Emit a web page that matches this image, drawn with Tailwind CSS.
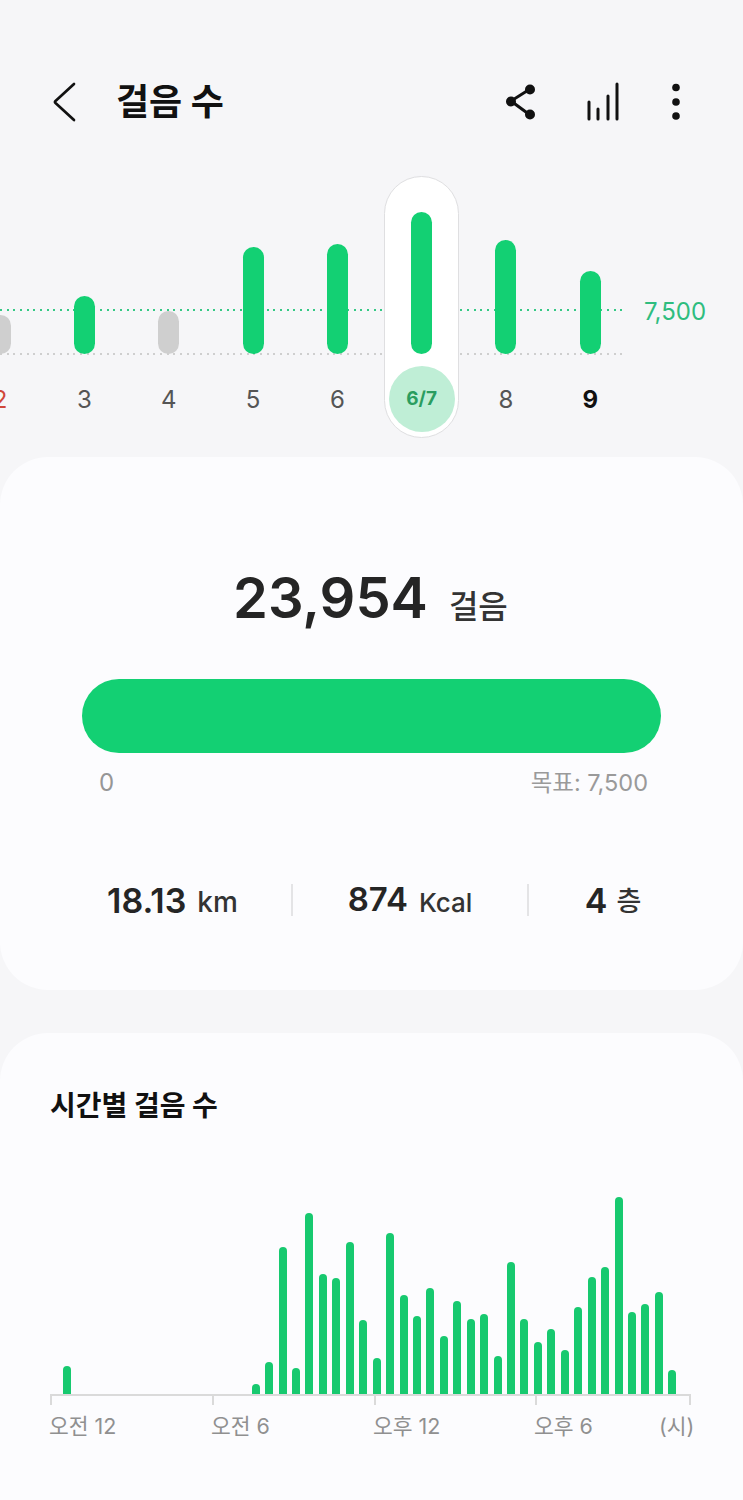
<!DOCTYPE html>
<html lang="ko">
<head>
<meta charset="utf-8">
<script src="https://cdn.jsdelivr.net/npm/@tailwindcss/browser@4"></script>
</head>
<body class="m-0 h-[1500px] w-[743px] overflow-hidden bg-[#f6f6f8] font-['Inter','Noto_Sans_CJK_KR',sans-serif] text-[#252525]">
<header class="mt-[72px] flex h-[60px] items-center">
  <svg class="ml-[50px] h-[40px] w-[28px]" viewBox="0 0 28 40" fill="none" stroke="#111" stroke-width="2.7" stroke-linecap="round" stroke-linejoin="round"><path d="M24 2 L5.5 19 Q4.5 20 5.5 21 L24 38"/></svg>
  <h1 class="ml-[38px] w-[300px] text-[36px] leading-[60px] font-bold text-[#111]">걸음 수</h1>
  <svg class="ml-[87px] h-[40px] w-[36px]" viewBox="0 0 36 40" fill="#111" stroke="#111"><path d="M27 7 L8 19 L27 33" fill="none" stroke-width="3"/><circle cx="8" cy="19.5" r="5" stroke="none"/><circle cx="27" cy="7.5" r="5" stroke="none"/><circle cx="27" cy="32.5" r="5" stroke="none"/></svg>
  <svg class="ml-[46px] h-[40px] w-[36px]" viewBox="0 0 36 40" fill="none" stroke="#111" stroke-width="3" stroke-linecap="round"><path d="M4 20 V37 M13 27 V37 M23 14 V37 M32 2 V37"/></svg>
  <svg class="ml-[45px] h-[40px] w-[20px]" viewBox="0 0 20 40" fill="#111"><circle cx="10" cy="5.5" r="3.8"/><circle cx="10" cy="20" r="3.8"/><circle cx="10" cy="34" r="3.8"/></svg>
</header>

<section class="relative mt-[44px] h-[262px] w-[743px]">
  <div class="absolute top-[133px] left-0 h-[2px] w-[622px] bg-[repeating-linear-gradient(90deg,#35c985_0_2px,transparent_2px_6.67px)]"></div>
  <div class="absolute top-[177px] left-0 h-[2px] w-[622px] bg-[repeating-linear-gradient(90deg,#cfcfcf_0_2px,transparent_2px_6.67px)]"></div>
  <span class="absolute top-[120px] left-[644px] text-[24px] leading-[32px] text-[#2fbd7f]">7,500</span>
  <div class="relative -ml-[42px] flex w-[800px]">
    <div class="relative flex w-[84.3px] flex-col items-center">
      <div class="flex h-[178px] items-end"><div class="h-[39px] w-[21px] rounded-full bg-[#cfcfcf]"></div></div>
      <div class="mt-[13px] flex h-[66px] items-center text-[24px] text-[#d0473a]">2</div>
    </div>
    <div class="relative flex w-[84.3px] flex-col items-center">
      <div class="flex h-[178px] items-end"><div class="h-[58px] w-[21px] rounded-full bg-[#13d073]"></div></div>
      <div class="mt-[13px] flex h-[66px] items-center text-[24px] text-[#555]">3</div>
    </div>
    <div class="relative flex w-[84.3px] flex-col items-center">
      <div class="flex h-[178px] items-end"><div class="h-[43px] w-[21px] rounded-full bg-[#cfcfcf]"></div></div>
      <div class="mt-[13px] flex h-[66px] items-center text-[24px] text-[#555]">4</div>
    </div>
    <div class="relative flex w-[84.3px] flex-col items-center">
      <div class="flex h-[178px] items-end"><div class="h-[107px] w-[21px] rounded-full bg-[#13d073]"></div></div>
      <div class="mt-[13px] flex h-[66px] items-center text-[24px] text-[#555]">5</div>
    </div>
    <div class="relative flex w-[84.3px] flex-col items-center">
      <div class="flex h-[178px] items-end"><div class="h-[110px] w-[21px] rounded-full bg-[#13d073]"></div></div>
      <div class="mt-[13px] flex h-[66px] items-center text-[24px] text-[#555]">6</div>
    </div>
    <div class="relative flex w-[84.3px] flex-col items-center">
      <div class="absolute top-0 left-[4.1px] h-[262px] w-[75px] rounded-full border-[1.5px] border-[#dfdfe1] bg-white ring-1 ring-[#f6f6f8]"></div>
      <div class="relative flex h-[178px] items-end"><div class="h-[142px] w-[21px] rounded-full bg-[#13d073]"></div></div>
      <div class="relative mt-[12px] flex h-[66px] w-[66px] items-center justify-center rounded-full bg-[#bfeed6] text-[19px] font-bold text-[#2a9d5f]">6/7</div>
    </div>
    <div class="relative flex w-[84.3px] flex-col items-center">
      <div class="flex h-[178px] items-end"><div class="h-[114px] w-[21px] rounded-full bg-[#13d073]"></div></div>
      <div class="mt-[13px] flex h-[66px] items-center text-[24px] text-[#555]">8</div>
    </div>
    <div class="relative flex w-[84.3px] flex-col items-center">
      <div class="flex h-[178px] items-end"><div class="h-[83px] w-[21px] rounded-full bg-[#13d073]"></div></div>
      <div class="mt-[13px] flex h-[66px] items-center text-[24px] font-bold text-[#111]">9</div>
    </div>
  </div>
</section>

<section class="mt-[19px] h-[533px] rounded-[48px] bg-[#fcfcfe] pt-[105px]">
  <div class="flex h-[72px] items-baseline pl-[233px]">
    <span class="text-[56px] leading-[72px] font-semibold text-[#252525]">23,954</span>
    <span class="ml-[21px] text-[32px] font-medium text-[#333]">걸음</span>
  </div>
  <div class="mx-[82px] mt-[45px] h-[74px] w-[579px] rounded-full bg-[#13d073]"></div>
  <div class="mt-[13px] flex w-[648px] items-baseline justify-between pl-[99px] text-[24px] leading-[34px] text-[#969696]">
    <span>0</span><span class="text-[23.5px] text-[#9a9a9a]">목표: 7,500</span>
  </div>
  <div class="mt-[84px] ml-[54px] flex h-[32px] items-center">
    <div class="flex h-full w-[239px] items-center justify-center gap-[11px] border-r-2 border-[#e4e4e6]"><span class="text-[34px] font-semibold">18.13</span><span class="mt-[4px] text-[28px] font-medium text-[#333]">km</span></div>
    <div class="flex h-full w-[236px] items-center justify-center gap-[11px] border-r-2 border-[#e4e4e6]"><span class="text-[33px] font-semibold">874</span><span class="mt-[4px] text-[26px] font-medium text-[#333]">Kcal</span></div>
    <div class="flex h-full w-[168px] items-center justify-center gap-[9px]"><span class="text-[34px] font-semibold">4</span><span class="mt-[4px] text-[27px] font-medium text-[#333]">층</span></div>
  </div>
</section>

<section class="mt-[43px] h-[520px] rounded-t-[48px] bg-[#fcfcfe] pt-[53px]">
  <h2 class="ml-[50px] text-[28px] leading-[40px] font-bold text-[#111]">시간별 걸음 수</h2>
  <div class="mt-[68px] flex h-[200px] items-end gap-[5.44px] pl-[62.7px]">
    <div class="w-[8px] rounded-t-[4px] bg-[#17c96f]" style="height:28px"></div>
    <div class="ml-[175.6px] w-[8px] rounded-t-[4px] bg-[#17c96f]" style="height:10px"></div>
    <div class="w-[8px] rounded-t-[4px] bg-[#17c96f]" style="height:32px"></div>
    <div class="w-[8px] rounded-t-[4px] bg-[#17c96f]" style="height:147px"></div>
    <div class="w-[8px] rounded-t-[4px] bg-[#17c96f]" style="height:26px"></div>
    <div class="w-[8px] rounded-t-[4px] bg-[#17c96f]" style="height:181px"></div>
    <div class="w-[8px] rounded-t-[4px] bg-[#17c96f]" style="height:120px"></div>
    <div class="w-[8px] rounded-t-[4px] bg-[#17c96f]" style="height:116px"></div>
    <div class="w-[8px] rounded-t-[4px] bg-[#17c96f]" style="height:152px"></div>
    <div class="w-[8px] rounded-t-[4px] bg-[#17c96f]" style="height:74px"></div>
    <div class="w-[8px] rounded-t-[4px] bg-[#17c96f]" style="height:36px"></div>
    <div class="w-[8px] rounded-t-[4px] bg-[#17c96f]" style="height:161px"></div>
    <div class="w-[8px] rounded-t-[4px] bg-[#17c96f]" style="height:99px"></div>
    <div class="w-[8px] rounded-t-[4px] bg-[#17c96f]" style="height:78px"></div>
    <div class="w-[8px] rounded-t-[4px] bg-[#17c96f]" style="height:106px"></div>
    <div class="w-[8px] rounded-t-[4px] bg-[#17c96f]" style="height:58px"></div>
    <div class="w-[8px] rounded-t-[4px] bg-[#17c96f]" style="height:93px"></div>
    <div class="w-[8px] rounded-t-[4px] bg-[#17c96f]" style="height:75px"></div>
    <div class="w-[8px] rounded-t-[4px] bg-[#17c96f]" style="height:80px"></div>
    <div class="w-[8px] rounded-t-[4px] bg-[#17c96f]" style="height:38px"></div>
    <div class="w-[8px] rounded-t-[4px] bg-[#17c96f]" style="height:132px"></div>
    <div class="w-[8px] rounded-t-[4px] bg-[#17c96f]" style="height:75px"></div>
    <div class="w-[8px] rounded-t-[4px] bg-[#17c96f]" style="height:52px"></div>
    <div class="w-[8px] rounded-t-[4px] bg-[#17c96f]" style="height:65px"></div>
    <div class="w-[8px] rounded-t-[4px] bg-[#17c96f]" style="height:44px"></div>
    <div class="w-[8px] rounded-t-[4px] bg-[#17c96f]" style="height:87px"></div>
    <div class="w-[8px] rounded-t-[4px] bg-[#17c96f]" style="height:117px"></div>
    <div class="w-[8px] rounded-t-[4px] bg-[#17c96f]" style="height:127px"></div>
    <div class="w-[8px] rounded-t-[4px] bg-[#17c96f]" style="height:197px"></div>
    <div class="w-[8px] rounded-t-[4px] bg-[#17c96f]" style="height:82px"></div>
    <div class="w-[8px] rounded-t-[4px] bg-[#17c96f]" style="height:90px"></div>
    <div class="w-[8px] rounded-t-[4px] bg-[#17c96f]" style="height:102px"></div>
    <div class="w-[8px] rounded-t-[4px] bg-[#17c96f]" style="height:24px"></div>
  </div>
  <div class="ml-[50px] flex h-[11px] w-[641px] border-t-2 border-[#dadada]">
    <i class="block h-[9px] w-[162px] border-l-2 border-[#dadada]"></i>
    <i class="block h-[9px] w-[162px] border-l-2 border-[#dadada]"></i>
    <i class="block h-[9px] w-[161px] border-l-2 border-[#dadada]"></i>
    <i class="block h-[9px] w-[154px] border-l-2 border-[#dadada]"></i>
    <i class="block h-[9px] w-[2px] bg-[#dadada]"></i>
  </div>
  <div class="ml-[49px] mt-[5px] flex text-[21.5px] leading-[32px] text-[#909090]">
    <span class="w-[162px]">오전 12</span>
    <span class="w-[162px]">오전 6</span>
    <span class="w-[161px]">오후 12</span>
    <span class="w-[125px]">오후 6</span>
    <span>(시)</span>
  </div>
</section>
</body>
</html>
